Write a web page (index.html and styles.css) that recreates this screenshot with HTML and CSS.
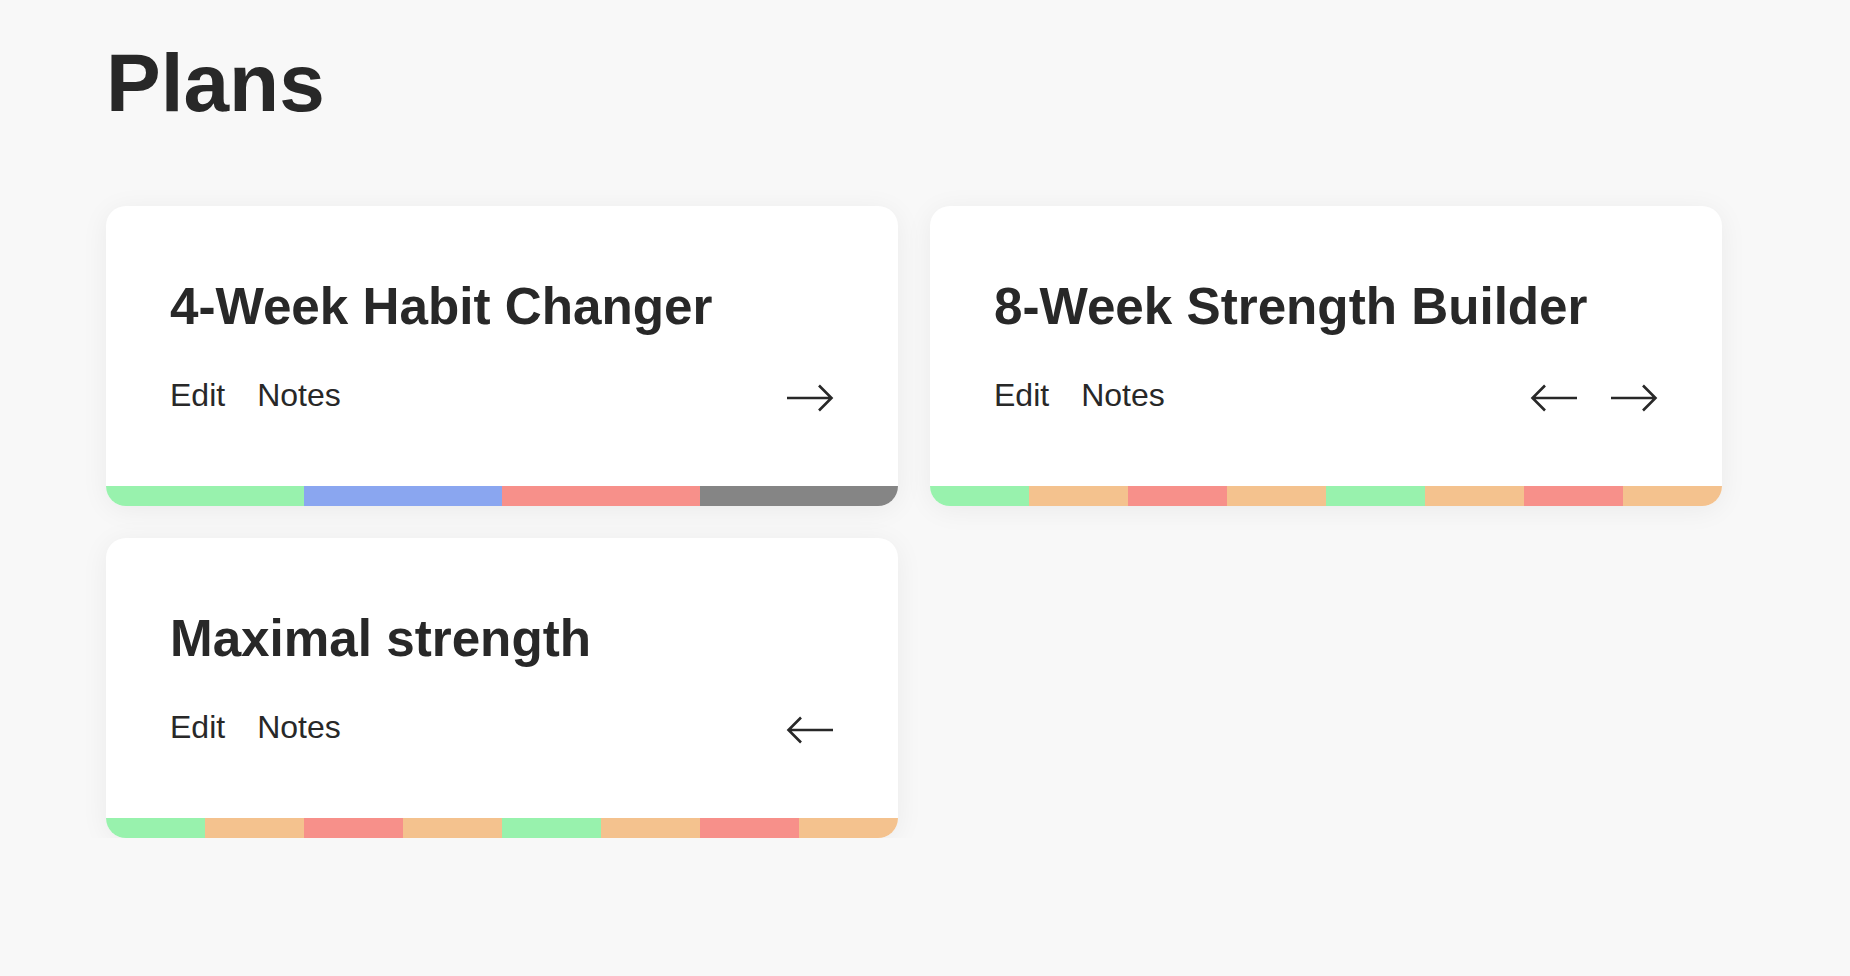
FILE: index.html
```html
<!DOCTYPE html>
<html lang="en">
<head>
<meta charset="utf-8">
<title>Plans</title>
<link rel="stylesheet" href="styles.css">
</head>
<body>
<main class="page">
  <h1 class="page-title">Plans</h1>
  <div class="plans">
    <article class="plan">
      <div class="plan-body">
        <h2 class="plan-title">4-Week Habit Changer</h2>
        <div class="plan-actions">
          <div class="links"><span>Edit</span><span>Notes</span></div>
          <div class="arrows">
            <svg class="arrow" viewBox="0 0 48 28" width="48" height="28"><path d="M1 14H46M33 1.5L45.5 14L33 26.5"/></svg>
          </div>
        </div>
      </div>
      <div class="bar">
        <span class="g"></span><span class="b"></span><span class="r"></span><span class="k"></span>
      </div>
    </article>
    <article class="plan">
      <div class="plan-body">
        <h2 class="plan-title">8-Week Strength Builder</h2>
        <div class="plan-actions">
          <div class="links"><span>Edit</span><span>Notes</span></div>
          <div class="arrows">
            <svg class="arrow" viewBox="0 0 48 28" width="48" height="28"><path d="M47 14H2M15 1.5L2.5 14L15 26.5"/></svg>
            <svg class="arrow" viewBox="0 0 48 28" width="48" height="28"><path d="M1 14H46M33 1.5L45.5 14L33 26.5"/></svg>
          </div>
        </div>
      </div>
      <div class="bar">
        <span class="g"></span><span class="o"></span><span class="r"></span><span class="o"></span><span class="g"></span><span class="o"></span><span class="r"></span><span class="o"></span>
      </div>
    </article>
    <article class="plan">
      <div class="plan-body">
        <h2 class="plan-title">Maximal strength</h2>
        <div class="plan-actions">
          <div class="links"><span>Edit</span><span>Notes</span></div>
          <div class="arrows">
            <svg class="arrow" viewBox="0 0 48 28" width="48" height="28"><path d="M47 14H2M15 1.5L2.5 14L15 26.5"/></svg>
          </div>
        </div>
      </div>
      <div class="bar">
        <span class="g"></span><span class="o"></span><span class="r"></span><span class="o"></span><span class="g"></span><span class="o"></span><span class="r"></span><span class="o"></span>
      </div>
    </article>
  </div>
</main>
</body>
</html>
```

FILE: styles.css
```css
* { box-sizing: border-box; }

html, body {
  margin: 0;
  padding: 0;
  background: #f8f8f8;
  color: #282828;
  font-family: "Liberation Sans", Arial, sans-serif;
}

.page {
  padding: 42px 0 0 106px;
}

.page-title {
  margin: 0;
  font-size: 82px;
  line-height: 1;
  font-weight: 700;
  color: #282828;
}

.plans {
  margin-top: 82px;
  display: grid;
  grid-template-columns: 792px 792px;
  gap: 32px;
}

.plan {
  height: 300px;
  background: #fff;
  border-radius: 20px;
  overflow: hidden;
  display: flex;
  flex-direction: column;
  box-shadow: 0 4px 28px rgba(0, 0, 0, 0.06);
}

.plan-body {
  flex: 1;
  padding: 75px 64px 0 64px;
}

.plan-title {
  margin: 0;
  font-size: 51.2px;
  line-height: 1;
  font-weight: 700;
}

.plan-actions {
  margin-top: 47px;
  display: flex;
  justify-content: space-between;
  align-items: flex-start;
}

.links {
  display: flex;
  gap: 32px;
  font-size: 32px;
  line-height: 1;
}

.arrows {
  display: flex;
  gap: 32px;
  margin-top: 5px;
}

.arrow {
  display: block;
  fill: none;
  stroke: #282828;
  stroke-width: 2.6;
}

.bar {
  height: 20px;
  display: flex;
}

.bar span { flex: 1; }
.bar .g { background: #98f2ad; }
.bar .b { background: #8aa6f0; }
.bar .r { background: #f7908a; }
.bar .k { background: #858585; }
.bar .o { background: #f4c28e; }
```
